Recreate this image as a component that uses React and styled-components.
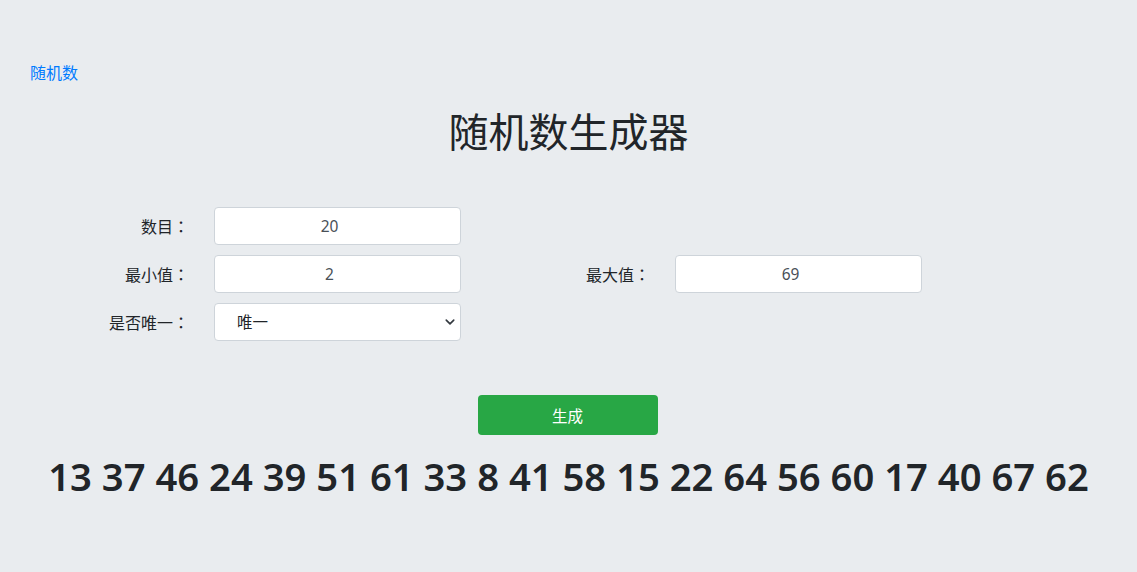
import React, { useState } from 'react'
import styled, { createGlobalStyle } from 'styled-components'

const GlobalStyle = createGlobalStyle`
  html, body {
    margin: 0;
    padding: 0;
    background: #e9ecef;
  }
  body {
    font-family: "Noto Sans", "Noto Sans CJK SC", sans-serif;
    color: #212529;
    font-size: 16px;
  }
`

const numbers = [13, 37, 46, 24, 39, 51, 61, 33, 8, 41, 58, 15, 22, 64, 56, 60, 17, 40, 67, 62]

const Field = ({ children }) => (
  <Label>
    {children}
    <Colon>：</Colon>
  </Label>
)

const App = () => {
  const [unique, setUnique] = useState('unique')

  return (
    <Page>
      <GlobalStyle />
      <Crumb href="#">随机数</Crumb>
      <Title>随机数生成器</Title>

      <Form>
        <Field>数目</Field>
        <Input type="number" defaultValue="20" />
        <Spacer />
        <Spacer />

        <Field>最小值</Field>
        <Input type="number" defaultValue="2" />
        <Field>最大值</Field>
        <Input type="number" defaultValue="69" />

        <Field>是否唯一</Field>
        <SelectWrap>
          <Select value={unique} onChange={e => setUnique(e.target.value)}>
            <option value="unique">唯一</option>
            <option value="repeat">可重复</option>
          </Select>
          <Chevron width="10" height="10" viewBox="0 0 16 16">
            <path d="M2 5l6 6 6-6" fill="none" stroke="#343a40" strokeWidth="2.6" strokeLinecap="round" strokeLinejoin="round" />
          </Chevron>
        </SelectWrap>
      </Form>

      <ButtonRow>
        <GenButton>生成</GenButton>
      </ButtonRow>

      <Result>{numbers.join(' ')}</Result>
    </Page>
  )
}

export default App

const Page = styled.div`
  min-height: 572px;
  padding-top: 61px;
  box-sizing: border-box;
`

const Crumb = styled.a`
  display: block;
  margin-left: 30px;
  width: max-content;
  color: #007bff;
  text-decoration: none;
  font-size: 16px;
  line-height: 24px;
`

const Title = styled.h1`
  margin: 23px 0 0;
  text-align: center;
  font-size: 40px;
  font-weight: 400;
  line-height: 48px;
`

const Form = styled.div`
  display: grid;
  grid-template-columns: 130px 247px 166px 247px;
  grid-auto-rows: 38px;
  column-gap: 24px;
  row-gap: 10px;
  margin: 51px 0 0 60px;
`

const Label = styled.label`
  display: flex;
  align-items: center;
  justify-content: flex-end;
  font-size: 16px;
  margin-right: 1px;
`

const Colon = styled.span`
  display: inline-block;
  width: 16px;
  text-align: center;
  font-family: "Noto Sans CJK TC", sans-serif;
`

const Spacer = styled.div``

const Input = styled.input`
  box-sizing: border-box;
  width: 100%;
  height: 38px;
  border: 1px solid #ced4da;
  border-radius: 4px;
  background: #fff;
  padding: 0 16px 0 0;
  text-align: center;
  font-family: "Noto Sans", "Noto Sans CJK SC", sans-serif;
  font-size: 15.5px;
  color: #495057;
  outline: none;
  -moz-appearance: textfield;

  &::-webkit-inner-spin-button,
  &::-webkit-outer-spin-button {
    -webkit-appearance: none;
    margin: 0;
  }
`

const SelectWrap = styled.div`
  position: relative;
`

const Select = styled.select`
  appearance: none;
  box-sizing: border-box;
  width: 100%;
  height: 38px;
  border: 1px solid #ced4da;
  border-radius: 4px;
  background: #fff;
  padding: 0 0 0 22px;
  font-family: "Noto Sans", "Noto Sans CJK SC", sans-serif;
  font-size: 15.5px;
  color: #212529;
  outline: none;
`

const Chevron = styled.svg`
  position: absolute;
  right: 6px;
  top: 14px;
  pointer-events: none;
`

const ButtonRow = styled.div`
  display: flex;
  justify-content: center;
  margin-top: 54px;
  padding-right: 2px;
`

const GenButton = styled.button`
  width: 180px;
  height: 40px;
  border: none;
  border-radius: 4px;
  background: #28a745;
  color: #fff;
  font-family: "Noto Sans", "Noto Sans CJK SC", sans-serif;
  font-size: 15.5px;
  cursor: pointer;
`

const Result = styled.div`
  margin-top: 17px;
  text-align: center;
  font-size: 38.2px;
  font-weight: 600;
  line-height: 48px;
`
